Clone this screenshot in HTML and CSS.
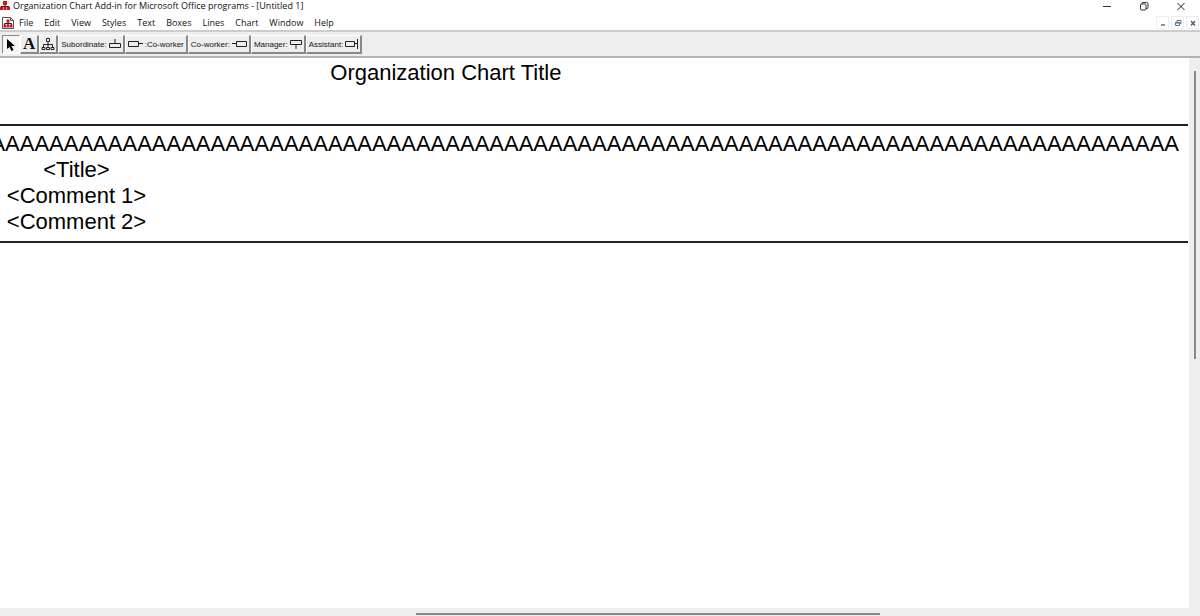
FILE: index.html
```html
<!DOCTYPE html>
<html lang="en">

<head>
    <meta charset="UTF-8">
    <meta name="viewport" content="width=device-width, initial-scale=1.0">
    <title>Organization Chart Add-in for Microsoft Office programs</title>
    <link rel="stylesheet" href="styles.css">
</head>

<body>
    <div class="window">
        <header class="titlebar">
            <svg class="app_icon" width="10" height="12" viewBox="0 0 10 12">
                <path d="M5 4v3M1 9V6.500h8V9" stroke="#222" fill="none" />
                <path d="M3 1h4v4H3zM0 7h3v3H0zM3.500 7h3v3h-3zM7 7h3v3H7z" fill="#d8101c" />
            </svg>
            <h1>Organization Chart Add-in for Microsoft Office programs - [Untitled 1]</h1>
            <div class="win_btns">
                <button type="button" aria-label="Minimize">
                    <svg width="10" height="10" viewBox="0 0 10 10"><path d="M1 5.500h8" stroke="#333" /></svg>
                </button>
                <button type="button" aria-label="Restore">
                    <svg width="10" height="10" viewBox="0 0 10 10" fill="none" stroke="#333">
                        <rect x="1.500" y="3" width="5.500" height="6" rx="1" />
                        <path d="M3 3V2.200Q3 1.500 4 1.500h3.500q1.500 0 1.500 1.500v3.500q0 1-1 1H7" />
                    </svg>
                </button>
                <button type="button" aria-label="Close">
                    <svg width="10" height="10" viewBox="0 0 10 10"><path d="M1.500 2l7 7M8.500 2l-7 7" stroke="#222" /></svg>
                </button>
            </div>
        </header>

        <nav class="menubar">
            <svg class="doc_icon" width="12" height="14" viewBox="0 0 12 14">
                <path d="M.5 1.500h8l3 3v8H.5z" fill="#fff" stroke="#555" />
                <path d="M8.500 1.500v3h3" fill="none" stroke="#555" />
                <path d="M6 5v4M2.500 9V7.500h7V9" stroke="#222" fill="none" />
                <path d="M4.500 3.500h3v3h-3zM1.500 8.500h3v3h-3zM5 8.500h2v3H5zM7.500 8.500h3v3h-3z" fill="#d8101c" />
            </svg>
            <ul>
                <li><a href="#">File</a></li>
                <li><a href="#">Edit</a></li>
                <li><a href="#">View</a></li>
                <li><a href="#">Styles</a></li>
                <li><a href="#">Text</a></li>
                <li><a href="#">Boxes</a></li>
                <li><a href="#">Lines</a></li>
                <li><a href="#">Chart</a></li>
                <li><a href="#">Window</a></li>
                <li><a href="#">Help</a></li>
            </ul>
            <div class="doc_btns">
                <button type="button" aria-label="Minimize document">
                    <svg width="8" height="8" viewBox="0 0 8 8"><path d="M2 6h4" stroke="#5d7288" stroke-width="1.500" /></svg>
                </button>
                <button type="button" aria-label="Restore document">
                    <svg width="8" height="8" viewBox="0 0 8 8" fill="none" stroke="#5d7288">
                        <path d="M1.500 3.500h4v3h-4zM1 4h5M3 3V1.500h4v3H6M3 1.500h4" />
                    </svg>
                </button>
                <button type="button" aria-label="Close document">
                    <svg width="8" height="8" viewBox="0 0 8 8"><path d="M2 2l4 4.500M6 2L2 6.500" stroke="#4d6279" stroke-width="1.500" /></svg>
                </button>
            </div>
        </nav>

        <div class="toolbar">
            <button type="button" class="tool pressed" aria-label="Select">
                <svg width="10" height="14" viewBox="0 0 10 14"><path d="M1 1v10l2.500-2 2 4 2-1-2-4H9z" fill="#000" /></svg>
            </button>
            <button type="button" class="tool letter">A</button>
            <button type="button" class="tool icon" aria-label="Chart">
                <svg width="14" height="14" viewBox="0 0 14 14" fill="none" stroke="#222">
                    <path d="M5.500 1.500h3v3h-3zM7 4.500v6M2.500 10V7.500h9V10M1 10.500h3v2H1zM5.500 10.500h3v2h-3zM10 10.500h3v2h-3z" />
                </svg>
            </button>
            <button type="button" class="tool">Subordinate:
                <svg width="12" height="10" viewBox="0 0 12 10" fill="none" stroke="#222"><path d="M.5 4.500h11v4H.5zM6 4.500V0" /></svg>
            </button>
            <button type="button" class="tool">
                <svg width="15" height="10" viewBox="0 0 15 10" fill="none" stroke="#222"><path d="M.5 2.500h10v5H.5zM10.500 4.500H15" /></svg>
                :Co-worker
            </button>
            <button type="button" class="tool">Co-worker:
                <svg width="15" height="10" viewBox="0 0 15 10" fill="none" stroke="#222"><path d="M4.500 2.500h10v5h-10zM4.500 4.500H0" /></svg>
            </button>
            <button type="button" class="tool">Manager:
                <svg width="12" height="10" viewBox="0 0 12 10" fill="none" stroke="#222"><path d="M.5 1.500h11v4H.5zM6 5.500V10" /></svg>
            </button>
            <button type="button" class="tool">Assistant:
                <svg width="13" height="10" viewBox="0 0 13 10" fill="none" stroke="#222"><path d="M.5 2.500h9v5h-9zM9.500 4.500H12M12.500 0v10" /></svg>
            </button>
        </div>

        <div class="workspace">
            <main class="canvas">
                <h2>Organization Chart Title</h2>
                <section class="box">
                    <p class="name">AAAAAAAAAAAAAAAAAAAAAAAAAAAAAAAAAAAAAAAAAAAAAAAAAAAAAAAAAAAAAAAAAAAAAAAAAAAAAAAAA</p>
                    <div class="fields">
                        <p>&lt;Title&gt;</p>
                        <p>&lt;Comment 1&gt;</p>
                        <p>&lt;Comment 2&gt;</p>
                    </div>
                </section>
            </main>
            <div class="vscroll"><div class="thumb"></div></div>
            <div class="hscroll"><div class="thumb"></div></div>
        </div>
    </div>
</body>

</html>
```

FILE: styles.css
```css
* {
    padding: 0;
    margin: 0;
    list-style: none;
    box-sizing: border-box;
}

body {
    background: #fff;
    color: #111;
    font-family: "Open Sans", "Noto Sans", sans-serif;
    font-size: 9px;
}

button {
    border: 0;
    background: none;
    font: inherit;
    color: inherit;
}

svg {
    display: block;
    flex: none;
}

a {
    color: inherit;
    text-decoration: none;
}

.window {
    min-height: 100vh;
    display: flex;
    flex-direction: column;
}

/* title bar */
.titlebar {
    display: flex;
    align-items: center;
    height: 12px;
    gap: 3px;
}

.titlebar h1 {
    font-size: 9px;
    font-weight: normal;
    line-height: 12px;
    white-space: nowrap;
}

.win_btns {
    display: flex;
    margin-left: auto;
    padding-right: 1px;
}

.win_btns button {
    width: 37px;
    display: flex;
    justify-content: center;
}

/* menu */
.menubar {
    display: flex;
    align-items: center;
    height: 20px;
    padding: 3px 1px 0 2px;
    border-bottom: 2px solid #ccc;
}

.menubar ul {
    display: flex;
    gap: 11px;
    padding-left: 5px;
}

.menubar a {
    display: block;
    line-height: 15px;
}

.doc_btns {
    display: flex;
    gap: 2px;
    margin-left: auto;
}

.doc_btns button {
    display: flex;
    align-items: center;
    justify-content: center;
    width: 13px;
    height: 13px;
    border: 1px solid #eee;
}

/* toolbar */
.toolbar {
    display: flex;
    height: 26px;
    padding: 3px 2px 2px;
    background: #eee;
    border-bottom: 2px solid #b4b4b4;
}

.tool {
    display: flex;
    align-items: center;
    gap: 2px;
    padding: 0 2px;
    border: 1px solid #fff;
    border-right: 2px solid #888;
    border-bottom: 2px solid #888;
    font-family: "Liberation Sans", Arial, sans-serif;
    font-size: 8px;
    white-space: nowrap;
}

.tool.pressed {
    padding: 0 3px;
    border: 1px solid #fff;
    border-top-color: #888;
    border-left-color: #888;
    background: #f6f6f6;
}

.tool.letter {
    font-family: "Liberation Serif", "Times New Roman", serif;
    font-size: 17px;
    font-weight: bold;
}

.tool.icon {
    padding: 0 1px;
}

/* drawing area */
.workspace {
    flex: 1;
    display: grid;
    grid-template-columns: 1fr 11px;
    grid-template-rows: 1fr 8px;
}

.canvas {
    min-width: 0;
    overflow: hidden;
    font-family: "Liberation Sans", Arial, sans-serif;
    font-size: 22px;
    line-height: 26px;
    color: #000;
}

.canvas h2 {
    width: 75%;
    padding-top: 2px;
    font-size: 22px;
    font-weight: normal;
    text-align: center;
}

.box {
    margin: 38px 1px 0 0;
    padding: 5px 0 6px;
    border-top: 2px solid #222;
    border-bottom: 2px solid #222;
}

/* long names run off the left edge */
.name {
    display: flex;
    justify-content: flex-end;
    padding-right: 9px;
}

.fields {
    width: 153px;
    text-align: center;
}

.vscroll {
    grid-row: span 2;
    background: #eee;
    padding: 13px 4px 0 5px;
}

.vscroll .thumb {
    height: 288px;
    background: #8a8a8a;
}

.hscroll {
    background: #eee;
    padding-top: 5px;
}

.hscroll .thumb {
    width: 39%;
    height: 2px;
    margin-left: 35%;
    background: #8a8a8a;
}
```
